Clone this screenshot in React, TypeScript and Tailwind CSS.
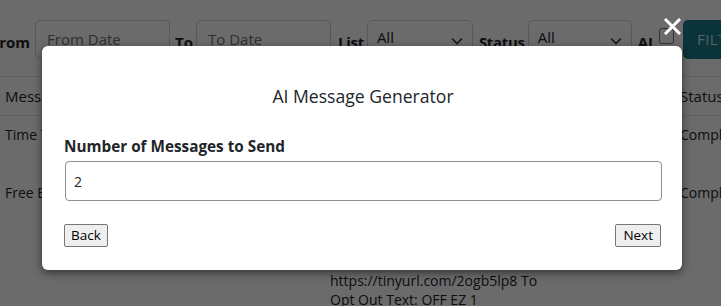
import React from "react";

function Chevron() {
  return (
    <svg width="12" height="8" viewBox="0 0 12 8" className="shrink-0">
      <path d="M1 1.5 L6 6.5 L11 1.5" fill="none" stroke="#343a40" strokeWidth="1.6" />
    </svg>
  );
}

export default function App() {
  return (
    <div className="relative w-[721px] h-[306px] overflow-hidden bg-white text-[#212529]" style={{ fontFamily: '"Open Sans", "Noto Sans", sans-serif' }}>
      {/* page content */}
      <div className="ml-[-9px] w-[800px]">
        <div className="flex items-center h-[76px] pt-[2px] gap-[3px]">
          <span className="shrink-0 text-[15px] font-bold mt-[6px]">From</span>
          <div className="shrink-0 ml-[2px] w-[135px] h-[39px] border border-[#ced4da] rounded-[5px] flex items-center pl-[11px] text-[15px] text-[#6c757d]">From Date</div>
          <span className="shrink-0 ml-[2px] text-[15px] font-bold mt-[6px]">To</span>
          <div className="shrink-0 w-[135px] h-[39px] border border-[#ced4da] rounded-[5px] flex items-center pl-[11px] text-[15px] text-[#6c757d]">To Date</div>
          <span className="shrink-0 ml-[4px] text-[15px] font-bold mt-[6px] tracking-[-0.3px]">List</span>
          <div className="shrink-0 w-[106px] h-[39px] border border-[#ced4da] rounded-[5px] flex items-center justify-between pl-[9px] pr-[9px] text-[15px]">
            <span className="mt-[-3px]">All</span>
            <span className="mt-[3px]"><Chevron /></span>
          </div>
          <span className="shrink-0 ml-[3px] text-[15px] font-bold mt-[6px] tracking-[-0.3px]">Status</span>
          <div className="shrink-0 w-[104px] h-[39px] border border-[#ced4da] rounded-[5px] flex items-center justify-between pl-[9px] pr-[9px] text-[15px]">
            <span className="mt-[-3px]">All</span>
            <span className="mt-[3px]"><Chevron /></span>
          </div>
          <span className="shrink-0 ml-[3px] text-[15px] font-bold mt-[6px]">AI</span>
          <div className="shrink-0 ml-[3px] w-[15px] h-[16px] border border-[#767676] rounded-[3px] bg-white mt-[-6px]"></div>
          <div className="shrink-0 ml-[6px] h-[39px] w-[90px] rounded-[5px] bg-[#1a7c8a] text-[#cfe6ea] text-[15px] flex items-center pl-[14px] tracking-wide">FILTER</div>
        </div>
        <div className="border-t border-[#dee2e6]"></div>
        <div className="flex h-[39px] items-center text-[15px] border-b border-[#dee2e6]">
          <span className="shrink-0 ml-[14px] w-[675px]">Message</span>
          <span>Status</span>
        </div>
        <div className="flex text-[14px] pt-[8px]">
          <span className="shrink-0 ml-[14px] w-[675px]">Time To Save</span>
          <span>Completed</span>
        </div>
        <div className="flex text-[14px] pt-[37px]">
          <span className="shrink-0 ml-[14px] w-[675px]">Free Brunch</span>
          <span>Completed</span>
        </div>
        <div className="ml-[339px] text-[14px] leading-[19px] mt-[68px]">
          <div>https://tinyurl.com/2ogb5lp8 To</div>
          <div>Opt Out Text: OFF EZ 1</div>
        </div>
      </div>

      {/* overlay */}
      <div className="absolute inset-0 bg-black/[0.58]"></div>

      {/* close */}
      <svg className="absolute left-[664px] top-[18px]" width="17" height="17" viewBox="0 0 17 17">
        <path d="M2 2 L15 15 M15 2 L2 15" stroke="white" strokeWidth="3" strokeLinecap="square" />
      </svg>

      {/* modal */}
      <div className="absolute left-[42px] top-[46px] w-[640px] h-[224px] bg-white rounded-[6px] shadow-[0_3px_8px_rgba(0,0,0,0.5)] pl-[22px] pr-[20px] pt-[38px]">
        <div className="text-center text-[17.6px] leading-[24px] text-[#212529]">AI Message Generator</div>
        <div className="mt-[28px] text-[15.3px] leading-[20px] font-bold text-[#212529]">Number of Messages to Send</div>
        <div className="mt-[5px] ml-[1px] h-[40px] border border-[#8f8f8f] rounded-[4px] flex items-center pl-[8px] text-[14px] text-[#212529]">2</div>
        <div className="mt-[23px] flex justify-between">
          <button className="h-[23px] px-[6px] bg-[#efefef] border border-[#767676] rounded-[2px] text-[13.5px] leading-[19px] text-black" style={{ fontFamily: '"Open Sans", sans-serif' }}>Back</button>
          <button className="h-[23px] px-[7px] mr-[1px] bg-[#efefef] border border-[#767676] rounded-[2px] text-[13.5px] leading-[19px] text-black" style={{ fontFamily: '"Open Sans", sans-serif' }}>Next</button>
        </div>
      </div>
    </div>
  );
}
